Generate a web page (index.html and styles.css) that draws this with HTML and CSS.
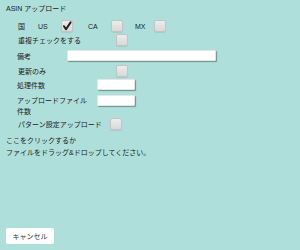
FILE: index.html
```html
<!DOCTYPE html>
<html lang="ja">
<head>
<meta charset="utf-8">
<link rel="stylesheet" href="styles.css">
</head>
<body>
<div class="form">
  <div class="title">ASIN アップロード</div>

  <div class="row country">
    <span>国</span>
    <span class="latin">US</span>
    <span class="cb checked"><svg viewBox="0 0 12 12" width="12" height="12"><path d="M3 6.2 L5 9.2 L9.6 2.4" fill="none" stroke="#222" stroke-width="2" stroke-linecap="round" stroke-linejoin="round"/></svg></span>
    <span class="latin">CA</span>
    <span class="cb"></span>
    <span class="latin">MX</span>
    <span class="cb"></span>
  </div>

  <div class="row r-dup">
    <span class="label w-dup">重複チェックをする</span>
    <span class="cb"></span>
  </div>

  <div class="row r-note">
    <span class="label w-note">備考</span>
    <span class="input wide"></span>
  </div>

  <div class="row r-upd">
    <span class="label w-dup">更新のみ</span>
    <span class="cb"></span>
  </div>

  <div class="row r-count">
    <span class="label w-count">処理件数</span>
    <span class="input short"></span>
  </div>

  <div class="row r-file">
    <span class="label w-count two">アップロードファイル件数</span>
    <span class="input short"></span>
  </div>

  <div class="row r-pat">
    <span class="label w-pat">パターン設定アップロード</span>
    <span class="cb"></span>
  </div>

  <div class="drop">ここをクリックするか<br>ファイルをドラッグ&amp;ドロップしてください。</div>

  <button class="cancel">キャンセル</button>
</div>
</body>
</html>
```

FILE: styles.css
```css
html, body {
  margin: 0;
  padding: 0;
  background: #aedfda;
}
body {
  width: 300px;
  height: 250px;
  overflow: hidden;
  font-family: "Liberation Sans", "Noto Sans CJK JP", sans-serif;
  font-size: 7px;
  color: #222;
}
.form {
  padding: 0 6px;
}
.title {
  margin-top: 4px;
  line-height: 10px;
}
.row {
  display: flex;
  align-items: center;
  margin-left: 11px;
}
.country {
  display: grid;
  grid-template-columns: 20px 23px 27px 23px 24px 19px 12px;
  align-items: center;
  height: 12px;
  margin-top: 6px;
  margin-left: 12px;
}
.latin {
  font-size: 7px;
}
.cb {
  display: block;
  box-sizing: border-box;
  width: 12px;
  height: 12px;
  border: 1px solid #c4c4c4;
  border-radius: 2px;
  background: linear-gradient(#ececec, #d9d9d9);
  box-shadow: 0 1px 1px rgba(0, 0, 0, 0.08);
  position: relative;
}
.cb svg {
  position: absolute;
  left: -1px;
  top: -1px;
}
.r-dup { height: 12px; margin-top: 2px; margin-left: 12px; }
.r-note { height: 11px; margin-top: 4px; }
.r-upd { height: 11px; margin-top: 4px; margin-left: 12px; }
.r-count { height: 11px; margin-top: 3px; }
.r-file { align-items: flex-start; margin-top: 5px; }
.r-pat { height: 12px; margin-top: 1px; margin-left: 12px; }

.label { flex: none; }
.w-dup { width: 98px; }
.w-note { width: 50px; }
.w-count { width: 80px; }
.w-pat { width: 92px; }
.two {
  width: 74px;
  margin-right: 6px;
  line-height: 11px;
  margin-top: -0.5px;
}
.input {
  display: block;
  box-sizing: border-box;
  height: 11px;
  background: #fff;
  border-radius: 1px;
  border: 1px solid #e6e6e6;
  box-shadow: 1px 1px 1px rgba(0, 0, 0, 0.35);
}
.wide { width: 149px; }
.short { width: 38px; }

.drop {
  margin-top: 5px;
  line-height: 12px;
}
.cancel {
  display: block;
  margin-top: 69px;
  width: 48px;
  height: 16px;
  padding: 0;
  border: none;
  border-radius: 2px;
  background: #fff;
  font-family: "Liberation Sans", "Noto Sans CJK JP", sans-serif;
  font-size: 7px;
  color: #333;
}
```
